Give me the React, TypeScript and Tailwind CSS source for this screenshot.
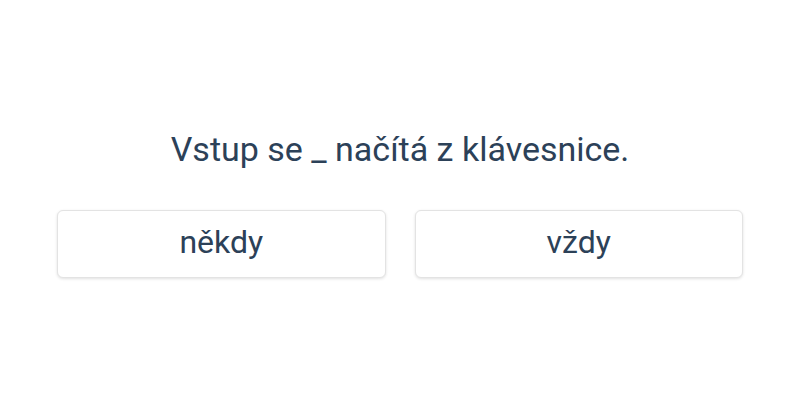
const options = ['někdy', 'vždy'];

const App = () => {
  return (
    <main
      className="w-[800px] h-[400px] bg-white flex flex-col items-center justify-center text-[#2c4158]"
      style={{ fontFamily: 'Roboto, "Noto Sans", sans-serif' }}
    >
      <h1 className="mt-[6px] text-[34px] leading-[42px] font-normal">Vstup se _ načítá z klávesnice.</h1>
      <section className="mt-[40px] w-[686px] grid grid-cols-2 gap-[29px]">
        {options.map((option) => (
          <button
            key={option}
            type="button"
            className="h-[68px] pb-[4px] bg-white rounded-md border border-[#e3e3e3] shadow-[0_1px_3px_rgba(0,0,0,0.12)] text-[32px] text-[#2c4158]"
          >
            {option}
          </button>
        ))}
      </section>
    </main>
  );
};

export default App;
